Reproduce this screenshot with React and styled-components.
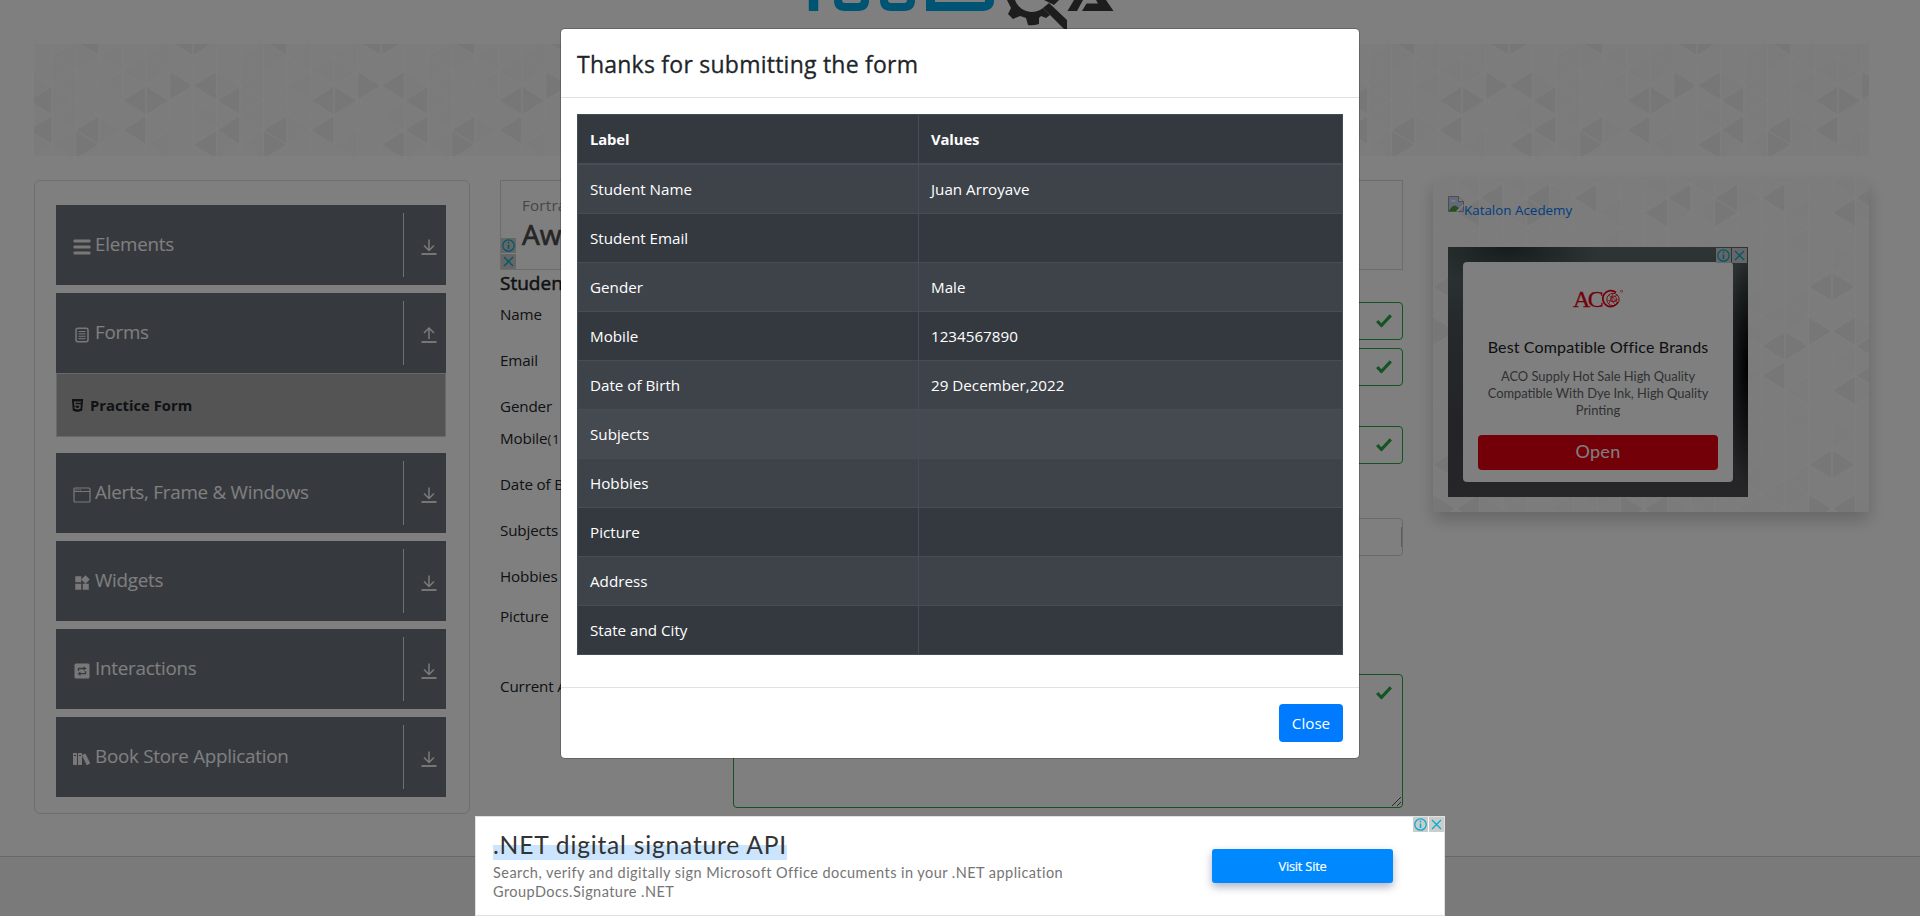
import React from "react";
import styled, { createGlobalStyle, css } from "styled-components";
import { ImBooks } from "react-icons/im";
import { MdWidgets } from "react-icons/md";
import { SiHtml5 } from "react-icons/si";

const GlobalStyle = createGlobalStyle`
  *, *::before, *::after { box-sizing: border-box; }
  html, body { margin: 0; padding: 0; background: #fff; }
  body { overflow: hidden; font-family: "Open Sans", "Noto Sans", sans-serif; font-size: 15.2px; line-height: 24px; color: #212529; }
`;

const product = '"Lato", "Open Sans", sans-serif';

const Screen = styled.div`
  position: relative;
  width: 1920px;
  height: 916px;
  overflow: hidden;
  background: #fff;
`;
const Page = styled.div`
  display: flex;
  flex-direction: column;
  height: 916px;
`;
const LogoBar = styled.header`
  height: 44px;
  padding-left: 800px;
`;
const Main = styled.main`
  height: 812px;
  padding: 0 51px 0 34px;
`;
const Banner = styled.div`
  position: relative;
  height: 112px;
  margin-bottom: 24px;
`;
const Columns = styled.div`
  display: grid;
  grid-template-columns: 436px 903px 436px;
  column-gap: 30px;
  align-items: start;
`;
const Footer = styled.footer`
  flex: 1;
  border-top: 1px solid #cfcfcf;
  background: #f5f5f5;
`;
const PatternSvg = styled.svg`
  position: absolute;
  inset: 0;
  width: 100%;
  height: 100%;
`;

/* sidebar */
const Sidebar = styled.nav`
  height: 634px;
  padding: 24px 22px 0 21px;
  border: 1px solid #dcdcdc;
  border-radius: 6px;
`;
const Group = styled.div`
  margin-bottom: ${(p) => (p.$open ? 16 : 8)}px;
`;
const GroupHead = styled.div`
  display: flex;
  align-items: center;
  height: 80px;
  width: 390px;
  background: #6c757d;
  color: #fff;
  padding-left: 16px;
`;
const GroupIcon = styled.span`
  display: flex;
  justify-content: center;
  width: 20px;
  margin: 4px 3px 0 0;
  color: #f0f0f0;
`;
const GroupTitle = styled.span`
  flex: 1;
  padding-bottom: 2px;
  font-size: 18.8px;
  letter-spacing: -0.24px;
`;
const GroupToggle = styled.span`
  display: flex;
  align-items: center;
  justify-content: center;
  width: 43px;
  height: 64px;
  padding: 5px 0 0 7px;
  border-left: 1px solid #e0e0e0;
`;
const SubItem = styled.div`
  display: flex;
  align-items: center;
  gap: 6px;
  height: 64px;
  width: 390px;
  padding-left: 14px;
  background: #a9a9a9;
  border: 1px solid #ced4da;
  font-weight: 700;
  font-size: 14.8px;
  letter-spacing: 0;
  color: #212529;
`;

/* form */
const FormColumn = styled.section`
  height: 640px;
`;
const TextAd = styled.div`
  position: relative;
  height: 90px;
  padding: 11px 0 0 21px;
  border: 1px solid #d8d8d8;
`;
const TextAdBrand = styled.div`
  font-size: 15.2px;
  line-height: 26px;
  letter-spacing: 0.2px;
  color: #8d8d8d;
`;
const TextAdTitle = styled.div`
  font-size: 28px;
  line-height: 32px;
  -webkit-text-stroke: 0.7px #4c4c4c;
  color: #4c4c4c;
`;
const FormTitle = styled.h5`
  margin: 0;
  padding-top: 1px;
  height: 32px;
  font-size: 19px;
  line-height: 24px;
  font-weight: 400;
  -webkit-text-stroke: 0.5px #212529;
`;
const FormRow = styled.div`
  display: flex;
  height: ${(p) => p.$h}px;
  margin-bottom: 8px;
`;
const FormLabel = styled.label`
  width: 233px;
  letter-spacing: -0.15px;
  small { font-size: 12.8px; letter-spacing: 1px; }
`;
const Field = styled.div`
  flex: 1;
  display: flex;
  justify-content: flex-end;
  align-items: ${(p) => (p.$area ? "flex-start" : "center")};
  padding: ${(p) => (p.$area ? "11px 10px 0 0" : "0 10px 0 0")};
  position: relative;
  border: 1px solid ${(p) => (p.$valid ? "#28a745" : "#ced4da")};
  border-radius: 4px;
`;
const Caret = styled.i`
  width: 1px;
  height: 20px;
  margin-right: -10px;
  background: #bdbdbd;
`;
const Resize = styled.svg`
  position: absolute;
  right: 0;
  bottom: 0;
`;

/* promo column */
const Promo = styled.aside`
  position: relative;
  height: 332px;
  padding: 16px 15px 0;
  box-shadow: 0 8px 16px rgba(0, 0, 0, 0.2);
`;
const PromoInner = styled.div`
  position: relative;
`;
const BrokenLink = styled.a`
  display: flex;
  align-items: flex-start;
  height: 51px;
  color: #007bff;
  font-size: 13.4px;
  line-height: 28px;
`;
const DisplayAd = styled.div`
  position: relative;
  width: 300px;
  height: 250px;
  padding: 15px;
  background:
    radial-gradient(ellipse 22px 120px at 100% 48%, #000 0%, rgba(0, 0, 0, 0) 100%),
    radial-gradient(ellipse 90px 40px at 20% 0%, #2c3838 0%, rgba(44, 56, 56, 0) 100%),
    linear-gradient(180deg, #5e6a6a 0%, #4a5355 30%, #48484e 70%, #4c4c52 100%);
`;
const DisplayCard = styled.div`
  display: flex;
  flex-direction: column;
  align-items: center;
  height: 220px;
  padding: 27px 15px 0;
  background: #fff;
  border-radius: 4px;
  font-family: ${product};
`;
const DisplayTitle = styled.div`
  margin-top: 26px;
  font-size: 16px;
  line-height: 24px;
  letter-spacing: 0.15px;
  white-space: nowrap;
  color: #202124;
`;
const DisplayText = styled.div`
  margin-top: 9px;
  width: 230px;
  text-align: center;
  font-size: 12.9px;
  line-height: 17px;
  color: #5f6368;
  white-space: pre;
`;
const OpenButton = styled.div`
  width: 240px;
  height: 35px;
  margin-top: 16px;
  border-radius: 4px;
  background: #e60012;
  color: #fff;
  font-size: 18px;
  letter-spacing: 0.3px;
  line-height: 33px;
  text-align: center;
`;
const BadgeBox = styled.div`
  position: absolute;
  top: ${(p) => p.$top};
  bottom: ${(p) => p.$bottom};
  right: ${(p) => p.$right};
  left: ${(p) => p.$left};
  display: flex;
  flex-direction: ${(p) => p.$dir || "row"};
  gap: 1px;
  svg { display: block; background: #ccc; }
`;

/* modal */
const Backdrop = styled.div`
  position: absolute;
  inset: 0;
  background: rgba(0, 0, 0, 0.5);
`;
const ModalWrap = styled.div`
  position: absolute;
  inset: 0;
  display: flex;
  justify-content: center;
  align-items: flex-start;
  padding-top: 28px;
`;
const Modal = styled.div`
  width: 800px;
  border: 1px solid rgba(0, 0, 0, 0.2);
  border-radius: 5px;
  background: #fff;
  background-clip: padding-box;
`;
const ModalHeader = styled.div`
  padding: 17px 16px 15px;
  border-bottom: 1px solid #dee2e6;
  font-size: 23px;
  line-height: 36px;
  letter-spacing: 0.24px;
  -webkit-text-stroke: 0.3px #212529;
`;
const ModalBody = styled.div`
  padding: 16px 16px 32px;
`;
const ModalFooter = styled.div`
  display: flex;
  justify-content: flex-end;
  padding: 16px;
  border-top: 1px solid #dee2e6;
`;
const CloseButton = styled.button`
  width: 64px;
  height: 38px;
  padding: 0;
  border: 0;
  border-radius: 4px;
  background: #007bff;
  color: #fff;
  font: inherit;
`;
const Table = styled.table`
  width: 766px;
  table-layout: fixed;
  border-collapse: collapse;
  color: #fff;
  background: #343a40;
`;
const cell = css`
  border: 1px solid #454d55;
  padding: 12px;
  height: 49px;
  text-align: left;
`;
const Th = styled.th`
  ${cell}
  width: ${(p) => (p.$w ? `${p.$w}px` : "auto")};
  border-bottom-width: 2px;
  font-weight: 700;
  font-size: 14.8px;
  letter-spacing: -0.1px;
`;
const Td = styled.td`
  ${cell}
`;
const tones = { plain: "#343940", stripe: "#3e434a", hover: "#454950" };
const Tr = styled.tr`
  background: ${(p) => tones[p.$tone]};
`;

/* anchored ad */
const AnchorAd = styled.div`
  position: absolute;
  left: 475px;
  bottom: 0;
  display: flex;
  justify-content: space-between;
  width: 970px;
  height: 100px;
  padding: 14px 51px 0 17px;
  background: #fff;
  border: 1px solid #e0e0e0;
  font-family: ${product};
`;
const AnchorTitle = styled.div`
  height: 32px;
  span {
    display: inline-block;
    font-size: 24.6px;
    letter-spacing: 0.8px;
    line-height: 27px;
    height: 29px;
    color: #333;
    white-space: nowrap;
    background: linear-gradient(#fff 48%, #cce5ff 48%);
  }
`;
const AnchorText = styled.div`
  font-size: 14.5px;
  letter-spacing: 0.45px;
  line-height: 19px;
  color: #757575;
  white-space: nowrap;
`;
const VisitButton = styled.div`
  width: 181px;
  height: 34px;
  margin-top: 18px;
  border-radius: 3px;
  background: #08f;
  box-shadow: 0 4px 8px rgba(30, 40, 90, 0.35);
  color: #fff;
  font-family: "Open Sans", sans-serif;
  font-size: 12.8px;
  line-height: 34px;
  letter-spacing: -0.2px;
  -webkit-text-stroke: 0.2px #fff;
  text-align: center;
`;

const CW = 23.5;
const RH = 29.6;
/* [apex column, direction, row] on the 8 x 6 triangle lattice */
const darkTriangles = [
  [-1, -1, 0], [1, 1, 0], [3, -1, 0], [-3, -1, 1], [-1, -1, 1], [3, -1, 1],
  [-2, 1, 1.5], [2, -1, 1.5], [2, 1, -0.5], [2, -1, -0.5],
  [-3, -1, -2], [1, -1, -2], [3, 1, -2],
];
const faintTriangles = [
  [-4, 1, -0.5], [-2, -1, -0.5], [-4, -1, -0.5], [-4, -1, -1.5], [-2, 1, -1.5], [0, -1, -1.5],
  [-2, -1, -1.5], [4, -1, -1.5], [-3, 1, 0], [-1, 1, 1], [-1, -1, -1], [1, 1, -1], [5, 1, -1],
  [2, -1, 0.5], [4, -1, 0.5], [0, -1, 1.5], [4, 1, 1.5], [-4, -1, 1.5], [-4, -1, 0.5], [0, -1, 2.5], [3, 1, 3],
];
const tri = ([ax, dir, row], i) => {
  const x = ax * CW;
  const b = (ax - dir) * CW;
  const y = row * RH;
  const s = dir > 0 ? 1 : -1;
  return [-188, 0, 188].map((dx) =>
    [-177.6, 0, 177.6].map((dy) => (
      <path
        key={`${i}${dx}${dy}`}
        strokeLinejoin="round"
        d={`M${x + dx - 2.4 * s} ${y + dy}L${b + dx + 1.5 * s} ${y + dy - 12.2}V${y + dy + 12.2}Z`}
      />
    ))
  );
};
const Triangles = ({ id, x, y }) => (
  <PatternSvg>
    <defs>
      <pattern id={id} x={x} y={y} width="188" height="177.6" patternUnits="userSpaceOnUse">
        <rect width="188" height="177.6" fill="#f9f9f9" />
        <g fill="#f6f6f6" stroke="#f6f6f6" strokeWidth="1">{faintTriangles.map(tri)}</g>
        <g fill="#eeeeee" stroke="#eeeeee" strokeWidth="1.4">{darkTriangles.map(tri)}</g>
        <g stroke="#fcfcfc" strokeWidth="1" fill="none">
          {Array.from({ length: 9 }, (_, k) => <path key={k} d={`M${k * CW} 0V178`} />)}
          {Array.from({ length: 16 }, (_, k) => (
            <path key={`d${k}`} d={`M0 ${(k - 6.5) * RH}L188 ${(k - 2.5) * RH}M0 ${(k - 1.5) * RH}L188 ${(k - 5.5) * RH}`} />
          ))}
        </g>
      </pattern>
    </defs>
    <rect width="100%" height="100%" fill={`url(#${id})`} />
  </PatternSvg>
);

const Logo = () => (
  <svg width="320" height="30" viewBox="800 0 320 30">
    <g fill="none" stroke="#00a8e6" strokeWidth="8">
      <path d="M813.5 0V11" strokeWidth="9.500" />
      <path d="M838 -6V0Q838 7 845 7H858Q865 7 865 0V-6" />
      <path d="M884 -6V0Q884 7 891 7H904Q911 7 911 0V-6" />
      <path d="M930.500 -6V6.500H983Q989.500 6.500 989.500 1V-4" strokeWidth="9" />
    </g>
    <g fill="#3a3a3a">
      <path d="M1007 0H1015Q1019 11 1031 12Q1038 12 1043 8L1050 15L1046 18L1041 16L1039 18V24Q1033 26 1028 25L1026 18L1020 16L1013 19L1008 14L1011 8Z" />
      <path d="M1043 8L1049 3L1067 20V29H1064Z" />
      <path d="M1044 0H1059L1054 5Z" />
      <path d="M1067.500 11L1074 0H1083L1077 11Z" />
      <path d="M1082 11L1086.500 3.500H1098L1096 0H1106L1113.500 11Z" />
    </g>
  </svg>
);

const ArrowIcon = ({ up }) => (
  <svg width="16" height="17" viewBox="0 0 16 17" fill="none" stroke="#f4f4f4" strokeWidth="1.5">
    <path d={up ? "M8 12V1M3 6L8 1L13 6" : "M8 0.500V12M3 6.500L8 11.500L13 6.500"} />
    <path d="M0.500 15H15.500" strokeWidth="1.9" />
  </svg>
);
const ListIcon = () => (
  <svg width="18" height="16" viewBox="0 0 18 16" fill="currentColor">
    <rect x="0.500" y="0.500" width="17" height="3" rx="1" />
    <rect x="0.500" y="6.500" width="17" height="3" rx="1" />
    <rect x="0.500" y="12.500" width="17" height="3" rx="1" />
  </svg>
);
const NotesIcon = () => (
  <svg width="14" height="16" viewBox="0 0 14 16" fill="none" stroke="currentColor">
    <rect x="1" y="1.200" width="12" height="13.600" rx="2" strokeWidth="1.500" />
    <path d="M3.500 4.500H10.500M3.500 6.900H10.500M3.500 9.300H10.500M3.500 11.700H10.500" />
  </svg>
);
const WindowIcon = () => (
  <svg width="18" height="16" viewBox="0 0 18 16" fill="none" stroke="currentColor">
    <rect x="1" y="1" width="16" height="14" rx="1" strokeWidth="1.200" />
    <path d="M1 4.500H17" />
    <path d="M2.500 2.800H8" strokeDasharray="1.500 0.700" />
  </svg>
);
const RepeatIcon = () => (
  <svg width="16" height="16" viewBox="0 0 16 16">
    <rect x="0.500" y="0.500" width="15" height="15" rx="1.500" fill="currentColor" />
    <g fill="none" stroke="#6c757d" strokeWidth="1.300">
      <path d="M4.500 8V5.500H10.500M11.500 8V10.700H5.500" />
    </g>
    <path d="M9.500 3.200L12.500 5.500L9.500 7.800ZM6.500 8.400L3.500 10.700L6.500 13Z" fill="#6c757d" />
  </svg>
);
const Check = () => (
  <svg width="16" height="14" viewBox="0 0 16 14" fill="none" stroke="#28a745" strokeWidth="3.200">
    <path d="M1.200 7L5.400 11.500L14.800 1.400" strokeLinejoin="round" />
  </svg>
);
const InfoMark = () => (
  <svg width="15" height="15" viewBox="0 0 15 15" fill="none" stroke="#00aecd" strokeWidth="1.200">
    <circle cx="7.500" cy="7.500" r="5.700" />
    <path d="M7.500 6.500V11M7.500 3.800V5.300" strokeWidth="1.500" />
  </svg>
);
const CloseMark = () => (
  <svg width="15" height="15" viewBox="0 0 15 15" fill="none" stroke="#00aecd" strokeWidth="1.300">
    <path d="M3 3L12 12M12 3L3 12" />
  </svg>
);
const Badge = (p) => (
  <BadgeBox {...p}>
    <InfoMark />
    <CloseMark />
  </BadgeBox>
);
const BrokenImage = () => (
  <svg width="16" height="16" viewBox="0 0 16 16">
    <path d="M.5 .5H10.500L15.500 5.500V15.500H.5Z" fill="#c5d5f7" stroke="#9a9a9a" />
    <path d="M10.500 .5V5.500H15.500" fill="#fff" stroke="#9a9a9a" />
    <path d="M3 5Q4 3 6 4Q8 4 8 5.500H3Z" fill="#fff" />
    <path d="M1 15Q4 9 8 10L11 12L8 15Z" fill="#4aa02c" />
    <path d="M8 15.500L15.500 8V10L10.500 15.500Z" fill="#fff" />
  </svg>
);
const AcoLogo = () => (
  <svg width="52" height="20" viewBox="0 0 52 20">
    <text x="1" y="17.500" fontFamily="Liberation Serif" fontSize="24" letterSpacing="-2.600" fill="#e60012" stroke="#e60012" strokeWidth="0.300">AC</text>
    <g fill="none" stroke="#e60012">
      <path d="M44 3.500A8 8 0 1 0 46 13" strokeWidth="1.700" />
      <circle cx="41" cy="10.500" r="6.200" strokeWidth="0.900" />
      <circle cx="41.500" cy="10" r="3" strokeWidth="0.800" />
      <path d="M36 6Q42 8 46 14M46 6Q38 8 37 15M41 4Q38 10 43 16M35 11Q41 14 47 10" strokeWidth="0.600" />
      <circle cx="49.500" cy="2.200" r="1.100" strokeWidth="0.500" />
    </g>
  </svg>
);

const groups = [
  { title: "Elements", icon: <ListIcon /> },
  { title: "Forms", icon: <NotesIcon />, open: true },
  { title: "Alerts, Frame & Windows", icon: <WindowIcon /> },
  { title: "Widgets", icon: <MdWidgets size={18} /> },
  { title: "Interactions", icon: <RepeatIcon /> },
  { title: "Book Store Application", icon: <ImBooks size={18} /> },
];
const fields = [
  { label: "Name", h: 38, valid: true },
  { label: "Email", h: 38, valid: true },
  { label: "Gender", h: 24 },
  { label: "Mobile", note: "(10 Digits)", h: 38, valid: true },
  { label: "Date of Birth", h: 38 },
  { label: "Subjects", h: 38, box: true },
  { label: "Hobbies", h: 32 },
  { label: "Picture", h: 62 },
  { label: "Current Address", h: 134, valid: true, area: true },
];
const rows = [
  ["Student Name", "Juan Arroyave", "stripe"],
  ["Student Email", "", "plain"],
  ["Gender", "Male", "stripe"],
  ["Mobile", "1234567890", "plain"],
  ["Date of Birth", "29 December,2022", "stripe"],
  ["Subjects", "", "hover"],
  ["Hobbies", "", "stripe"],
  ["Picture", "", "plain"],
  ["Address", "", "stripe"],
  ["State and City", "", "plain"],
];

export default function App() {
  return (
    <Screen>
      <GlobalStyle />
      <Page>
        <LogoBar><Logo /></LogoBar>
        <Main>
          <Banner><Triangles id="bannerTriangles" x={112} y={56.5} /></Banner>
          <Columns>
            <Sidebar>
              {groups.map((g) => (
                <Group key={g.title} $open={g.open}>
                  <GroupHead>
                    <GroupIcon>{g.icon}</GroupIcon>
                    <GroupTitle>{g.title}</GroupTitle>
                    <GroupToggle><ArrowIcon up={g.open} /></GroupToggle>
                  </GroupHead>
                  {g.open && <SubItem><SiHtml5 size={13} />Practice Form</SubItem>}
                </Group>
              ))}
            </Sidebar>
            <FormColumn>
              <TextAd>
                <TextAdBrand>Fortra</TextAdBrand>
                <TextAdTitle>Award</TextAdTitle>
                <Badge $left="0" $bottom="0" $dir="column" />
              </TextAd>
              <FormTitle>Student Registration Form</FormTitle>
              {fields.map((f) => (
                <FormRow key={f.label} $h={f.h}>
                  <FormLabel>{f.label}{f.note && <small>{f.note}</small>}</FormLabel>
                  {(f.valid || f.box) && (
                    <Field $valid={f.valid} $area={f.area}>
                      {f.valid ? <Check /> : <Caret />}
                      {f.area && (
                        <Resize width="11" height="11" viewBox="0 0 11 11" stroke="#555" fill="none">
                          <path d="M1 10L10 1M6 10L10 6" />
                        </Resize>
                      )}
                    </Field>
                  )}
                </FormRow>
              ))}
            </FormColumn>
            <Promo>
              <Triangles id="promoTriangles" x={352} y={166} />
              <PromoInner>
                <BrokenLink><BrokenImage />Katalon Acedemy</BrokenLink>
                <DisplayAd>
                  <DisplayCard>
                    <AcoLogo />
                    <DisplayTitle>Best Compatible Office Brands</DisplayTitle>
                    <DisplayText>{"ACO Supply Hot Sale High Quality\nCompatible With Dye Ink, High Quality\nPrinting"}</DisplayText>
                    <OpenButton>Open</OpenButton>
                  </DisplayCard>
                  <Badge $top="1px" $right="1px" />
                </DisplayAd>
              </PromoInner>
            </Promo>
          </Columns>
        </Main>
        <Footer />
      </Page>
      <Backdrop />
      <ModalWrap>
        <Modal>
          <ModalHeader>Thanks for submitting the form</ModalHeader>
          <ModalBody>
            <Table>
              <thead>
                <Tr $tone="plain"><Th $w={341}>Label</Th><Th>Values</Th></Tr>
              </thead>
              <tbody>
                {rows.map(([label, value, tone]) => (
                  <Tr key={label} $tone={tone}><Td>{label}</Td><Td>{value}</Td></Tr>
                ))}
              </tbody>
            </Table>
          </ModalBody>
          <ModalFooter><CloseButton>Close</CloseButton></ModalFooter>
        </Modal>
      </ModalWrap>
      <AnchorAd>
        <div>
          <AnchorTitle><span>.NET digital signature API</span></AnchorTitle>
          <AnchorText>Search, verify and digitally sign Microsoft Office documents in your .NET application</AnchorText>
          <AnchorText>GroupDocs.Signature .NET</AnchorText>
        </div>
        <VisitButton>Visit Site</VisitButton>
        <Badge $top="0" $right="0" />
      </AnchorAd>
    </Screen>
  );
}
